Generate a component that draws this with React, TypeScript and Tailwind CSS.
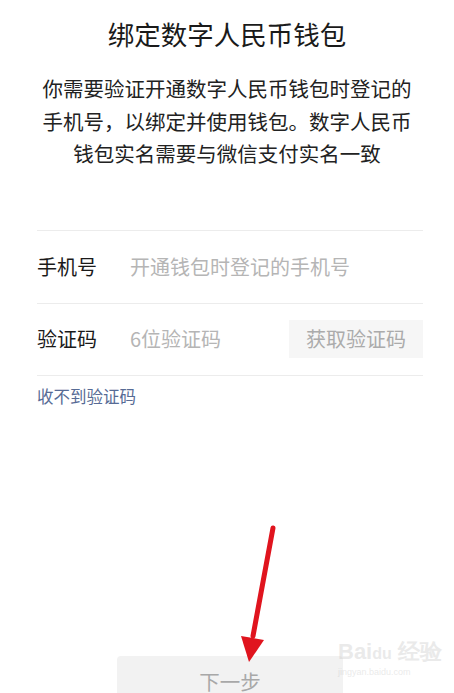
import React from 'react';

const cjk = { fontFamily: '"Noto Sans CJK SC", "Noto Sans", sans-serif' };

function Arrow() {
  return (
    <svg className="absolute left-0 top-0 pointer-events-none" width="454" height="693" viewBox="0 0 454 693">
      <line x1="273" y1="528" x2="253" y2="636" stroke="#e0141e" strokeWidth="5" strokeLinecap="round" />
      <polygon points="241,636 264,640 249,662" fill="#e0141e" />
    </svg>
  );
}

export default function App() {
  return (
    <div className="relative w-[454px] h-[693px] overflow-hidden bg-white flex flex-col" style={cjk}>
      <h1 className="pt-[16px] text-center text-[26.5px] leading-[36px] font-normal text-[#1a1a1a]">
        绑定数字人民币钱包
      </h1>
      <p className="mt-[20px] text-center text-[20.5px] leading-[32.5px] text-[#222222]">
        你需要验证开通数字人民币钱包时登记的<br />
        手机号，以绑定并使用钱包。数字人民币<br />
        钱包实名需要与微信支付实名一致
      </p>

      <div className="mt-[60px] ml-[37px] mr-[31px] border-t border-[#ececec]">
        <div className="h-[73px] flex items-center border-b border-[#ececec]">
          <span className="w-[93px] text-[20px] text-[#1a1a1a]">手机号</span>
          <span className="text-[20px] text-[#b5b5b5]">开通钱包时登记的手机号</span>
        </div>
        <div className="h-[72px] flex items-center border-b border-[#ececec]">
          <span className="w-[93px] text-[20px] text-[#1a1a1a]">验证码</span>
          <span className="flex-1 text-[20px] text-[#b5b5b5]">6位验证码</span>
          <div className="w-[134px] h-[38px] flex items-center justify-center bg-[#f6f6f6] text-[20px] text-[#ababab]">
            获取验证码
          </div>
        </div>
        <div className="mt-[9px] text-[16.5px] leading-[22px] text-[#576b95]">收不到验证码</div>
      </div>

      <div className="mt-auto ml-[117px] w-[226px] h-[37px] overflow-hidden bg-[#f2f2f2] rounded-t-[4px] flex justify-center pt-[11px]">
        <span className="text-[20.5px] leading-[28px] text-[#a8a8a8]">下一步</span>
      </div>

      <div className="absolute left-[338px] top-[640px] flex flex-col items-start opacity-30 pointer-events-none">
        <span className="text-[22px] leading-[24px] text-[#bbbbbb] font-bold" style={{ fontFamily: '"Liberation Sans", sans-serif' }}>Bai<span className="text-[16px]">du</span> 经验</span>
        <span className="text-[9px] leading-[12px] text-[#bbbbbb]" style={{ fontFamily: '"Liberation Sans", sans-serif' }}>jingyan.baidu.com</span>
      </div>

      <Arrow />
    </div>
  );
}
